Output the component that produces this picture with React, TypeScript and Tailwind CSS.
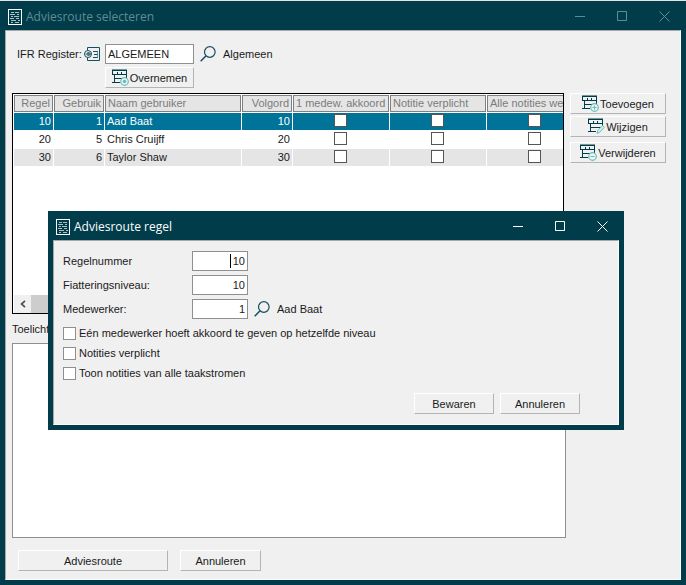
import type { ReactNode } from "react";
import clsx from "clsx";

const rows = [
  { regel: 10, gebruiker: 1, naam: "Aad Baat", volgorde: 10 },
  { regel: 20, gebruiker: 5, naam: "Chris Cruijff", volgorde: 20 },
  { regel: 30, gebruiker: 6, naam: "Taylor Shaw", volgorde: 30 },
];

const columns = [
  { label: "Regel", width: "w-10", right: true },
  { label: "Gebruik", width: "w-[51px]", right: true },
  { label: "Naam gebruiker", width: "w-[137px]" },
  { label: "Volgord", width: "w-[51px]", right: true },
  { label: "1 medew. akkoord", width: "w-[97px]" },
  { label: "Notitie verplicht", width: "w-[97px]" },
  { label: "Alle notities we", width: "w-[97px]" },
];

const flags = ["1 medew. akkoord", "Notitie verplicht", "Alle notities"];

function DocumentIcon() {
  return (
    <svg className="h-4 w-3.5 shrink-0" viewBox="0 0 14 16" fill="none" stroke="#fff">
      <rect x="0.5" y="0.5" width="13" height="15" />
      <path
        d="M3 3.5h3M7 3.5h4M2 5.5h5M9 5.5h2M3 7.5h2M6 7.5h5M2 9.5h4M8 9.5h3M3 11.5h5M10 11.5h2M3 13.5h2M7 13.5h4"
        strokeWidth="0.8"
        opacity="0.85"
      />
    </svg>
  );
}

function SearchIcon() {
  return (
    <svg className="h-4 w-4" viewBox="0 0 16 16" fill="none" stroke="#14505f" strokeWidth="1.2">
      <circle cx="9.8" cy="6" r="5.3" />
      <path d="M5.8 10 0.7 15.3" strokeWidth="1.5" />
    </svg>
  );
}

function RegisterIcon() {
  return (
    <svg className="h-4 w-4 shrink-0" viewBox="0 0 16 16" fill="none" stroke="#14505f">
      <path d="M3.5 4V1.5h12v13h-12V12" />
      <path d="M9 5.5h4.5M10 8.5h3.5M9 11.5h4.5" />
      <path d="M13.5 5v7" strokeWidth="0.6" />
      <circle cx="4" cy="8" r="3.5" />
      <path d="M1.500 8h5M4.500 6l2 2-2 2M4 6v4" />
    </svg>
  );
}

function ListIcon({ kind }: { kind: "refresh" | "plus" | "edit" | "minus" }) {
  return (
    <svg className="h-[17px] w-[17px] shrink-0" viewBox="0 0 17 17" fill="none">
      <path d="M0 1.5h15M.5 1v5M0 5.5h15M14.5 1v8M5.5 3v2M9.5 3v2M2 9.500h13M2.500 6v8M0 13.500h8" stroke="#003c4a" />
      <path d="M0 1h15" stroke="#003c4a" />
      {kind === "edit" ? (
        <path d="m9 15.500.8-3 4.800-5 1.800 1.800-4.800 5z" fill="#d5eeee" stroke="#66bfc0" />
      ) : (
        <circle cx="12.500" cy="12.500" r="3.800" fill="#f0f0f0" stroke="#66bfc0" strokeWidth="1.200" />
      )}
      {kind === "plus" && <path d="M10.500 12.500h4M12.500 10.500v4" stroke="#66bfc0" />}
      {kind === "minus" && <path d="M10.500 12.500h4" stroke="#66bfc0" />}
      {kind === "refresh" && <circle cx="12.500" cy="12.500" r="1.800" fill="#66bfc0" />}
    </svg>
  );
}

function TitleBar({ title, active }: { title: string; active?: boolean }) {
  const caption = "flex h-full w-[42px] items-center justify-center";
  return (
    <header
      className={clsx(
        "-mr-1 flex h-[29px] shrink-0 items-center bg-[#003c4a] pt-0.5",
        active ? "text-white" : "text-[#648b94]"
      )}
    >
      <DocumentIcon />
      <h1 className="ml-1 flex-1 font-['Open_Sans',sans-serif] text-[12px] leading-4">{title}</h1>
      <button className={caption} aria-label="Minimaliseren">
        <svg width="11" height="11" stroke="currentColor"><path d="M0 5.5h10" /></svg>
      </button>
      <button className={caption} aria-label="Maximaliseren">
        <svg width="11" height="11" stroke="currentColor" fill="none"><path d="M.5.5h9v9h-9z" /></svg>
      </button>
      <button className={caption} aria-label="Sluiten">
        <svg width="11" height="11" stroke="currentColor"><path d="m.5.5 10 10m0-10-10 10" /></svg>
      </button>
    </header>
  );
}

function PushButton({ children, className }: { children: ReactNode; className?: string }) {
  return (
    <button
      className={clsx(
        "flex h-[21px] items-center justify-center border border-t-white border-r-[#b4b4b4] border-b-[#b4b4b4] border-l-white bg-[#f0f0f0]",
        className
      )}
    >
      {children}
    </button>
  );
}

function NumberField({ id, label, value, caret }: { id: string; label: string; value: string; caret?: boolean }) {
  return (
    <>
      <label htmlFor={id} className="w-[129px]">{label}</label>
      <div className="relative">
        <input
          id={id}
          defaultValue={value}
          className="block h-5 w-14 border border-[#8f8f8f] bg-white px-0.5 text-right outline-none"
        />
        {caret && <span className="absolute top-[3px] right-[17px] h-3.5 w-px bg-black" />}
      </div>
    </>
  );
}

const checkbox = "block h-[13px] w-[13px] shrink-0 appearance-none border bg-white checked:bg-[#007399]";

function RegelDialog() {
  return (
    <section
      role="dialog"
      aria-label="Adviesroute regel"
      className="absolute top-[210px] left-12 w-[576px] bg-[#003c4a] px-[5px] pb-[5px]"
    >
      <div className="pl-[3px]">
        <TitleBar title="Adviesroute regel" active />
      </div>
      <div className="border border-t-[#a8a8a8] border-r-white border-b-white border-l-[#a8a8a8] bg-[#f0f0f0] pt-2.5 pr-[38px] pb-2.5 pl-[9px]">
        <div className="flex flex-col gap-1">
          <div className="flex items-center">
            <NumberField id="regelnummer" label="Regelnummer" value="10" caret />
          </div>
          <div className="flex items-center">
            <NumberField id="niveau" label="Fiatteringsniveau:" value="10" />
          </div>
          <div className="flex items-center">
            <NumberField id="medewerker" label="Medewerker:" value="1" />
            <button className="ml-1.5" aria-label="Zoek medewerker"><SearchIcon /></button>
            <span className="ml-[7px]">Aad Baat</span>
          </div>
        </div>
        <div className="mt-1.5 flex flex-col gap-1">
          {[
            "Eén medewerker hoeft akkoord te geven op hetzelfde niveau",
            "Notities verplicht",
            "Toon notities van alle taakstromen",
          ].map((text) => (
            <label key={text} className="flex h-4 items-center gap-[3px]">
              <input type="checkbox" className={clsx(checkbox, "border-[#8f8f8f]")} />
              {text}
            </label>
          ))}
        </div>
        <div className="mt-3 flex justify-end gap-1.5">
          <PushButton className="w-20">Bewaren</PushButton>
          <PushButton className="w-20">Annuleren</PushButton>
        </div>
      </div>
    </section>
  );
}

function RouteTable() {
  return (
    <div className="mr-0.5 flex h-[221px] flex-col overflow-hidden border border-black bg-white pt-px pl-px">
      <div className="flex-1 overflow-hidden">
        <table className="w-[570px] table-fixed border-separate border-spacing-0">
          <thead>
            <tr>
              {columns.map((c) => (
                <th key={c.label} className={clsx("h-[18px] p-0 pr-px pb-px font-normal text-[#7b7b7b]", c.width)}>
                  <div
                    className={clsx(
                      "h-[17px] overflow-hidden border border-[#808080] bg-[#e5e5e5] px-0.5 leading-[15px] whitespace-nowrap",
                      c.right ? "text-right" : "text-left"
                    )}
                  >
                    {c.label}
                  </div>
                </th>
              ))}
            </tr>
          </thead>
          <tbody>
            {rows.map((r, i) => (
              <tr
                key={r.regel}
                className={clsx(
                  "[&>td]:h-[18px] [&>td]:border-r [&>td]:border-b [&>td]:border-white [&>td]:px-0.5 [&>td]:py-0 [&>td]:align-top [&>td]:leading-4",
                  i === 0 && "bg-[#007399] text-white",
                  i === 2 && "bg-[#e5e5e5]"
                )}
              >
                <td className="text-right">{r.regel}</td>
                <td className="text-right">{r.gebruiker}</td>
                <td>{r.naam}</td>
                <td className="text-right">{r.volgorde}</td>
                {flags.map((f) => (
                  <td key={f}>
                    <div className="flex justify-center pt-px pr-0.5">
                      <input type="checkbox" aria-label={`${f} ${r.naam}`} className={clsx(checkbox, "border-[#555]")} />
                    </div>
                  </td>
                ))}
              </tr>
            ))}
          </tbody>
        </table>
      </div>
      <div className="flex h-[18px] bg-[#f0f0f0]">
        <button className="flex w-[17px] items-center justify-center" aria-label="Naar links">
          <svg width="6" height="8" fill="none" stroke="#505050" strokeWidth="1.700"><path d="M5 .8 1.500 4 5 7.200" /></svg>
        </button>
        <div className="w-3/4 bg-[#cdcdcd]" />
      </div>
    </div>
  );
}

export default function App() {
  return (
    <div className="bg-[#e5e5e5] pt-px font-['Liberation_Sans',Arial,sans-serif] text-[11px] leading-4 text-[#1a1a1a]">
      <div className="relative flex min-h-[calc(100vh-1px)] flex-col bg-[#003c4a] px-[5px] pb-[5px]">
        <div className="pl-[3px]">
          <TitleBar title="Adviesroute selecteren" />
        </div>

        <main className="flex flex-1 flex-col border border-t-[#a8a8a8] border-r-white border-b-white border-l-[#a8a8a8] bg-[#f0f0f0] pt-[13px] pr-[14px] pb-2 pl-1.5">
          <div className="flex items-center pl-[5px]">
            <label htmlFor="register" className="w-[67px]">IFR Register:</label>
            <RegisterIcon />
            <input
              id="register"
              defaultValue="ALGEMEEN"
              className="ml-[5px] h-5 w-[89px] border border-[#8f8f8f] bg-white px-0.5 outline-none"
            />
            <button className="ml-1.5" aria-label="Zoek register"><SearchIcon /></button>
            <span className="ml-[7px]">Algemeen</span>
          </div>
          <PushButton className="mt-[3px] ml-[93px] w-[89px] gap-px">
            <ListIcon kind="refresh" />
            Overnemen
          </PushButton>

          <div className="mt-[5px] flex flex-1 gap-1">
            <div className="flex min-w-0 flex-1 flex-col">
              <RouteTable />
              <label htmlFor="toelichting" className="mt-[7px]">Toelichting:</label>
              <textarea
                id="toelichting"
                className="mt-1.5 block w-full flex-1 resize-none border border-[#8f8f8f] bg-white outline-none"
              />
            </div>
            <div className="flex w-24 shrink-0 flex-col">
              <PushButton className="gap-px"><ListIcon kind="plus" />Toevoegen</PushButton>
              <PushButton className="mt-0.5 gap-px"><ListIcon kind="edit" />Wijzigen</PushButton>
              <PushButton className="mt-[5px] gap-px"><ListIcon kind="minus" />Verwijderen</PushButton>
            </div>
          </div>

          <div className="mt-3 flex gap-3 pl-1.5">
            <PushButton className="w-[150px]">Adviesroute</PushButton>
            <PushButton className="w-[81px]">Annuleren</PushButton>
          </div>
        </main>

        <RegelDialog />
      </div>
    </div>
  );
}
